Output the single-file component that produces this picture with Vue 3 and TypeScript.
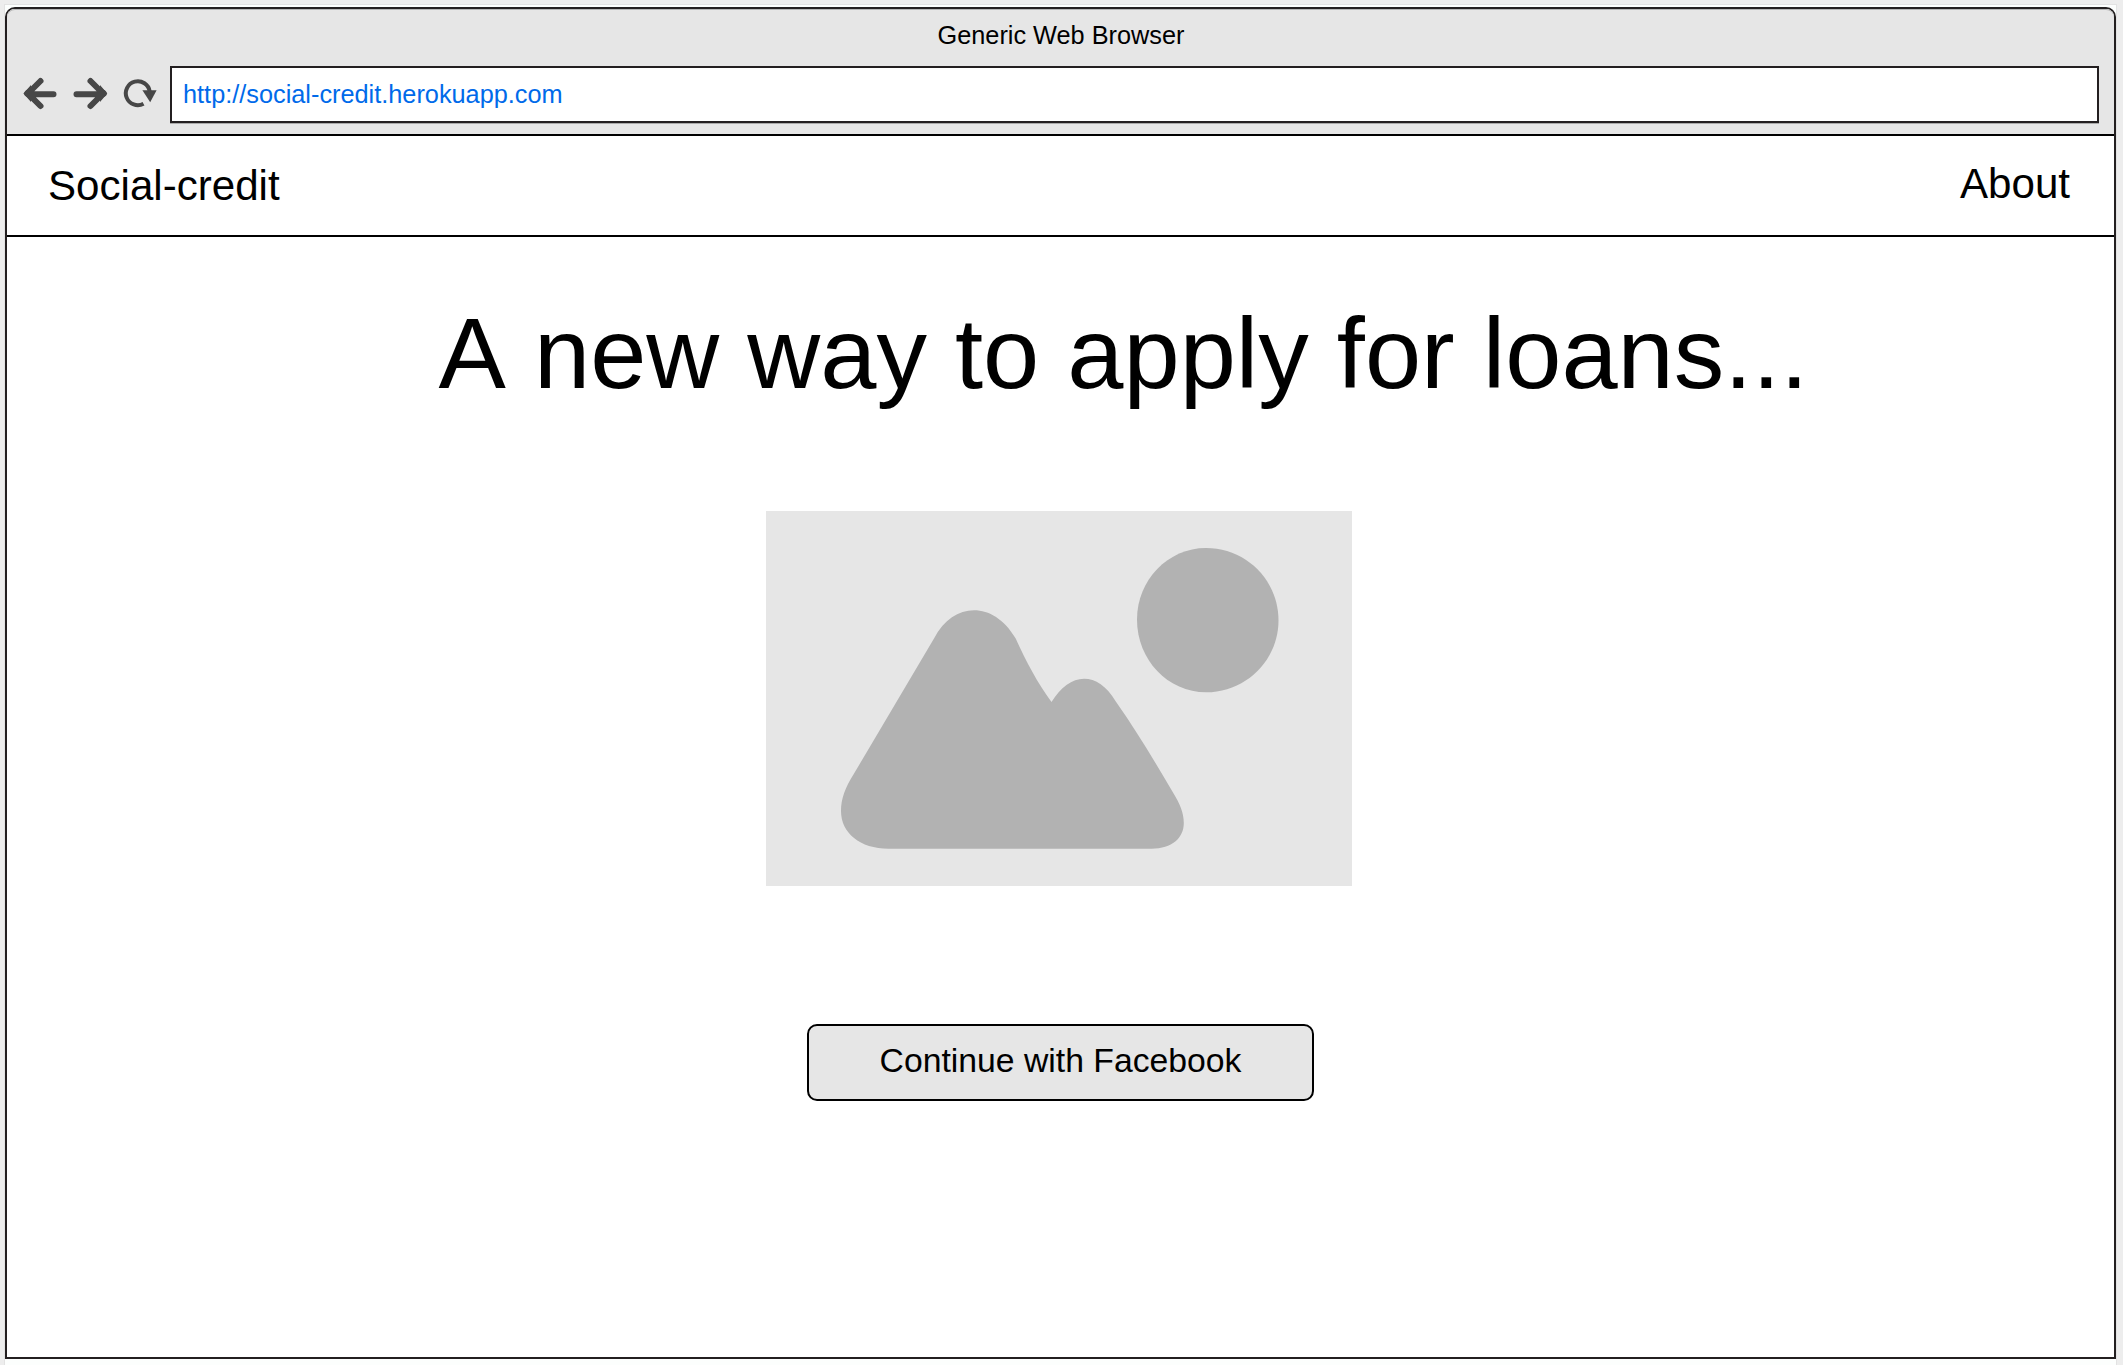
<script setup lang="ts">
const windowTitle = 'Generic Web Browser'
const url = 'http://social-credit.herokuapp.com'
</script>

<template>
  <div class="desk">
    <div class="sheet">
      <main class="window">
        <header class="chrome">
          <div class="title">{{ windowTitle }}</div>
          <div class="toolbar">
            <svg class="icons" width="150" height="56" viewBox="15 66 150 56">
              <g fill="none" stroke="#474747" stroke-width="6" stroke-linecap="round">
                <path d="M40.500 81 27.500 94M27.500 93 40.500 106M29 94.300H53.500" />
                <path d="M90.500 81 103.500 94M103.500 93 90.500 106M102 94.300H76.500" />
              </g>
              <path d="M31 85 23.400 93.500 31 102ZM100 85 107.300 93.500 100 102Z" fill="#474747" />
              <path d="M143.500 103.800A12 12 0 1 1 149.700 91.500" fill="none" stroke="#474747" stroke-width="4" stroke-linecap="butt" />
              <path d="M142.400 90.300H156.600L150.200 102.300Z" fill="#474747" />
            </svg>
            <div class="address">{{ url }}</div>
          </div>
        </header>
        <nav class="nav">
          <span class="brand">Social-credit</span>
          <span class="about">About</span>
        </nav>
        <section class="page">
          <h1 class="headline">A new way to apply for loans...</h1>
          <svg class="picture" width="586" height="375" viewBox="766 511 586 375">
            <rect x="766" y="511" width="586" height="375" fill="#e6e6e6" />
            <path d="M1206 548C1246 548 1278.500 580 1278.500 620.500 1278.500 660 1246 692.300 1206 692.300 1168 692.300 1137 660 1137 619.500 1137 580 1168 548 1206 548Z" fill="#b2b2b2" />
            <path d="M888.500 848.700H1151.500C1172 848.700 1183.800 838 1183.800 823 1183.800 812 1179.500 803.500 1173 792.500 1155 762 1137 731.500 1115.800 701.500 1106.500 686 1095.500 678.800 1084 678.800 1072 678.800 1061 687 1051.500 702 1037 682 1026 661 1015.700 638.500 1004 619 989 610.300 974 610.300 958.500 610.300 944 619.500 934 638.500L853.600 774.300C845 788 841 799 841 811 841 833 860 848.700 888.500 848.700Z" fill="#b2b2b2" />
          </svg>
          <button class="continue" type="button">Continue with Facebook</button>
        </section>
      </main>
    </div>
  </div>
</template>

<style>
body {
  background: #ededed;
}
</style>

<style scoped>
.desk {
  box-sizing: border-box;
  width: 2123px;
  height: 1365px;
  padding: 5px 7px 0 5px;
  overflow: hidden;
  background: #ededed;
  color: #000;
  font-family: "Liberation Sans", Arial, sans-serif;
  white-space: nowrap;
}
.sheet {
  box-sizing: border-box;
  height: 1360px;
  padding-top: 2px;
  background: #fcfefd;
  box-shadow: 0 0 0 1px #e2e2e2;
}
.window {
  box-sizing: border-box;
  display: flex;
  flex-direction: column;
  height: 1352px;
  border: 2px solid #231f20;
  border-radius: 10px 10px 0 0;
  background: #fff;
}
.chrome {
  box-sizing: border-box;
  height: 127px;
  border-bottom: 2px solid #000;
  border-radius: 8px 8px 0 0;
  background: #e6e6e6;
  box-shadow: inset 0 1px #b4b4b4;
}
.title {
  height: 57px;
  padding-left: 1px;
  line-height: 52px;
  text-align: center;
  font-size: 25.3px;
}
.toolbar {
  display: flex;
  height: 57px;
  padding-left: 8px;
}
.icons {
  flex: none;
}
.address {
  box-sizing: border-box;
  width: 1929px;
  height: 57px;
  margin-left: 5px;
  padding-left: 11px;
  border: 2px solid #231f20;
  background: #fff;
  box-shadow: 0 1px #aaa;
  color: #006aea;
  font-size: 25.3px;
  line-height: 53px;
}
.nav {
  box-sizing: border-box;
  display: flex;
  justify-content: space-between;
  height: 101px;
  padding: 0 44px 0 41px;
  border-bottom: 2px solid #000;
  font-size: 42.1px;
}
.brand {
  line-height: 99px;
}
.about {
  line-height: 95px;
}
.page {
  display: flex;
  flex-direction: column;
  align-items: center;
}
.headline {
  margin: 56px 0 0 126px;
  height: 120px;
  font-size: 101px;
  font-weight: 400;
  font-kerning: none;
  line-height: 120px;
}
.picture {
  margin-top: 98px;
  margin-right: 3px;
}
.continue {
  box-sizing: border-box;
  width: 507px;
  height: 77px;
  margin-top: 138px;
  padding: 0 0 4px;
  border: 2px solid #000;
  border-radius: 10px;
  background: #e6e6e6;
  color: #000;
  font: 33.74px/69px "Liberation Sans", Arial, sans-serif;
}
</style>
